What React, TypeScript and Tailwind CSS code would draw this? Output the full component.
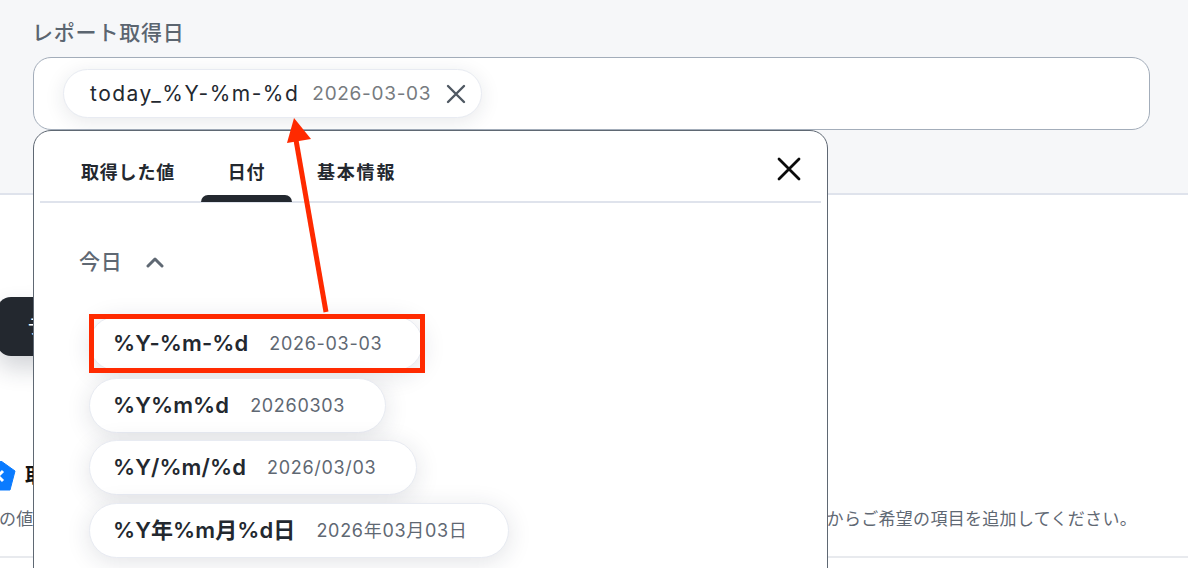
const formats = [
  { key: "%Y-%m-%d", value: "2026-03-03" },
  { key: "%Y%m%d", value: "20260303" },
  { key: "%Y/%m/%d", value: "2026/03/03" },
  { key: "%Y年%m月%d日", value: "2026年03月03日" },
];

const font = "font-['Inter','Noto_Sans_CJK_JP',sans-serif]";

const Popup = () => (
  <div className="absolute left-[33px] top-[130px] h-[520px] w-[795px] rounded-t-[18px] border border-[#5f6873] bg-white px-[6px]">
    <div className="relative flex h-[72px] border-b-2 border-[#dfe3ec] pl-[14px]">
      <div className="px-[27px] pt-[28px] text-[18px] leading-[27px] font-semibold tracking-[0.8px] text-[#23282f]">取得した値</div>
      <div className="relative -ml-[1px] w-[91px] pt-[28px] text-center text-[18px] leading-[27px] font-semibold tracking-[0.8px] text-[#23282f]">
        日付
        <div className="absolute right-0 -bottom-[1px] left-0 h-[7px] rounded-t-[7px] bg-[#23282f]" />
      </div>
      <div className="-ml-[2px] px-[27px] pt-[28px] text-[18px] leading-[27px] font-semibold tracking-[1.8px] text-[#23282f]">基本情報</div>
      <svg className="absolute top-[26px] right-[20px]" width="24" height="24" viewBox="0 0 24 24" fill="none" stroke="#0b0b0b" strokeWidth="2.8" strokeLinecap="round">
        <path d="M2 2 22 22M22 2 2 22" />
      </svg>
    </div>
    <div className="flex items-center gap-[23px] pt-[44px] pl-[39px] text-[#5f6873]">
      <span className="text-[21px] leading-[30px] font-medium tracking-[0.8px]">今日</span>
      <svg width="18" height="12" viewBox="0 0 18 12" fill="none" stroke="#5f6873" strokeWidth="3" strokeLinecap="round" strokeLinejoin="round">
        <path d="M2 10 9 3l7 7" />
      </svg>
    </div>
    <div className="flex flex-col items-start gap-[7.4px] pt-[38.5px] pl-[49px]">
      {formats.map((f) => (
        <div
          key={f.key}
          className="flex h-[55px] items-center gap-[21px] rounded-full border border-[#e8ebf2] bg-white pr-[40px] pl-[23px] shadow-[0_4px_24px_rgba(30,40,60,0.13)]"
        >
          <span className="text-[22px] font-semibold tracking-[0.1px] text-[#23282f]">{f.key}</span>
          <span className="text-[18px] tracking-[0.7px] text-[#5f6873]">{f.value}</span>
        </div>
      ))}
    </div>
  </div>
);

const Annotation = () => (
  <>
    <div className="absolute top-[314px] left-[89px] h-[59px] w-[336px] border-[5px] border-[#ff2a00]" />
    <svg className="absolute top-0 left-0" width="1188" height="568" fill="none">
      <path d="M326 312 296 140" stroke="#ff2a00" strokeWidth="5" />
      <path d="M294 118 287 143 311 139Z" fill="#ff2a00" />
    </svg>
  </>
);

export default function App() {
  return (
    <div className={`relative h-[568px] w-[1188px] overflow-hidden bg-white ${font}`}>
      <section className="h-[195px] border-b-2 border-[#dfe3ec] bg-[#f6f7f9] px-[33px] pt-[18px]">
        <label className="-ml-[1px] block text-[21px] leading-[30px] font-medium tracking-[0.8px] text-[#5b6570]">レポート取得日</label>
        <div className="mt-[9px] flex h-[73px] w-[1117px] items-start rounded-[18px] border border-[#a3adba] bg-white pt-[11px] pl-[30px]">
          <div className="-ml-[1px] flex h-[49px] items-center rounded-full border border-[#e8ebf2] bg-white pr-[15px] pl-[26px] shadow-[0_4px_20px_rgba(30,40,60,0.1)]">
            <span className="text-[21px] tracking-[1.5px] text-[#23282f]">today_%Y-%m-%d</span>
            <span className="mt-[1px] ml-[13px] text-[19px] tracking-[0.7px] text-[#777b80]">2026-03-03</span>
            <svg className="ml-[15px]" width="20" height="20" viewBox="0 0 20 20" fill="none" stroke="#4f5862" strokeWidth="2.4" strokeLinecap="round">
              <path d="M2 2 18 18M18 2 2 18" />
            </svg>
          </div>
        </div>
      </section>

      <section className="bg-white">
        <div className="mt-[102px] -ml-[3px] flex h-[59px] w-[100px] items-center rounded-[14px] bg-[#23282f] pl-[30px] text-[20px] text-white shadow-[0_12px_24px_rgba(30,40,60,0.2)]">
          テ
        </div>
        <div className="mt-[105px] -ml-[14px] flex h-[30px] items-center">
          <svg width="30" height="30" viewBox="0 0 30 30">
            <path d="M15 0 29 10 24 29H6L1 10Z" fill="#0a7bff" stroke="#0a7bff" strokeLinejoin="round" />
            <path d="M17 10 12 15l5 5" fill="none" stroke="#fff" strokeWidth="3" />
          </svg>
          <span className="ml-[9px] text-[20px] font-bold text-[#111]">取得</span>
        </div>
        <div className="mt-[16px] flex items-center justify-between pr-[51px] text-[17px] leading-[24px] tracking-[0.3px] text-[#5f6873]">
          <span className="-ml-[1px]">の値</span>
          <span>からご希望の項目を追加してください。</span>
        </div>
        <div className="mt-[25px] h-[2px] bg-[#e8eaee]" />
      </section>

      <Popup />
      <Annotation />
    </div>
  );
}
